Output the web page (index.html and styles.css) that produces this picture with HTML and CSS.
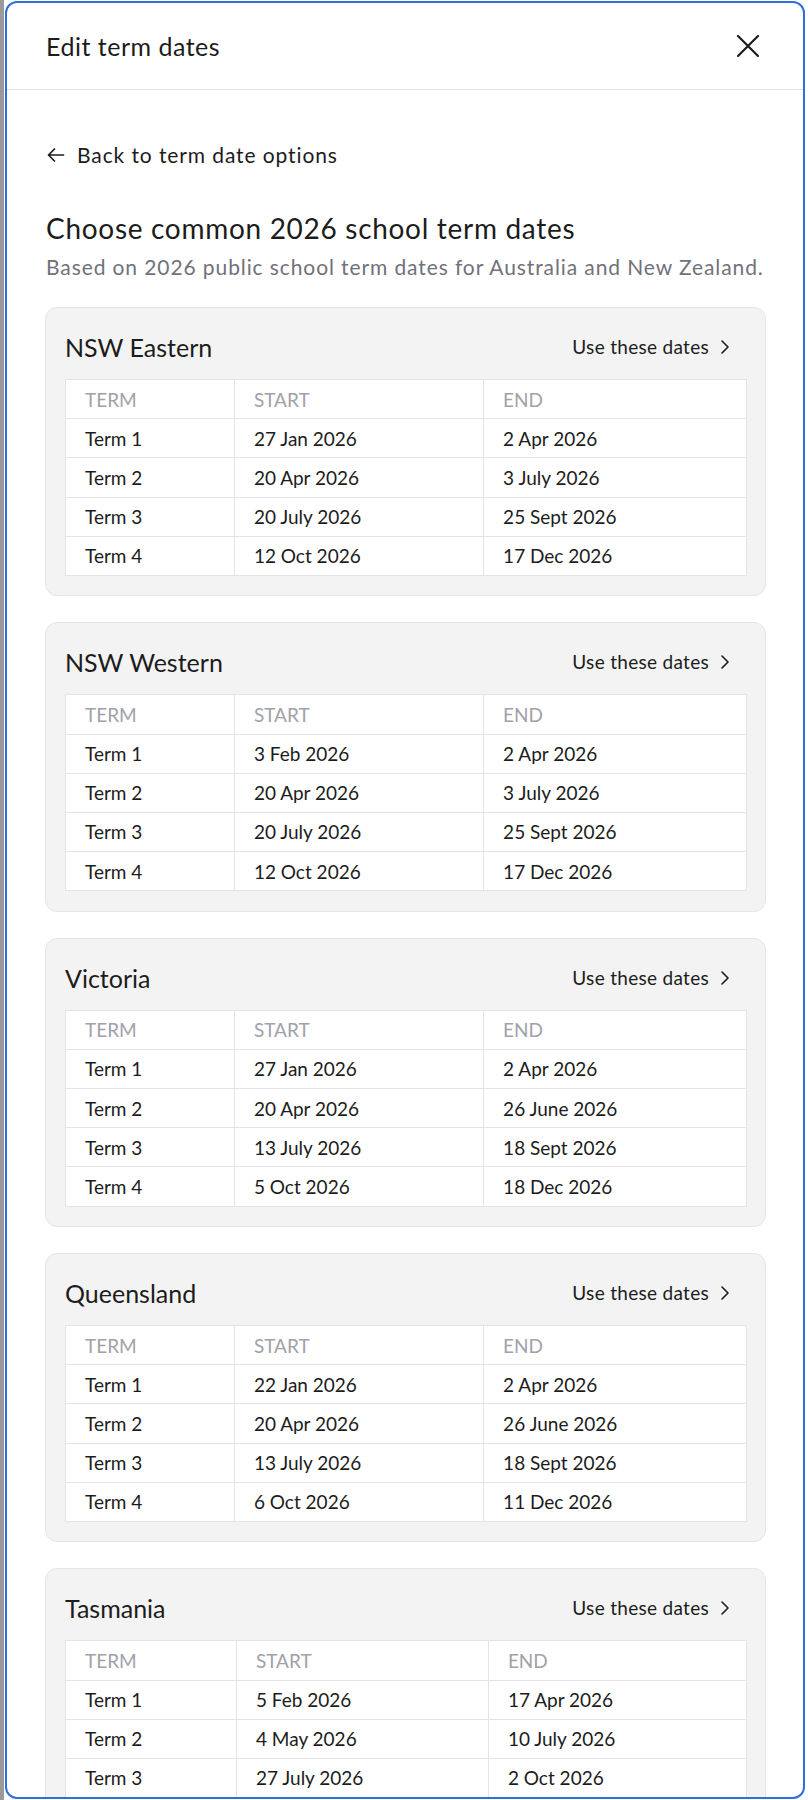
FILE: index.html
```html
<!DOCTYPE html>
<html lang="en">
<head>
<meta charset="utf-8">
<title>Edit term dates</title>
<link rel="stylesheet" href="styles.css">
</head>
<body>
<div class="modal">
  <header class="modal-header">
    <h1 class="modal-title">Edit term dates</h1>
    <button class="close-btn" aria-label="Close">
      <svg width="24" height="24" viewBox="0 0 24 24" fill="none" stroke="#1c1c1c" stroke-width="2.2" stroke-linecap="round"><path d="M2 2L22 22M22 2L2 22"/></svg>
    </button>
  </header>
  <div class="modal-body">
    <a class="back-link" href="#">
      <svg width="18" height="18" viewBox="0 0 18 18" fill="none" stroke="#1c1c1c" stroke-width="1.7" stroke-linecap="round" stroke-linejoin="round"><path d="M16.5 9H1.5M7.5 3L1.5 9l6 6"/></svg>
      <span>Back to term date options</span>
    </a>
    <h2 class="section-title">Choose common 2026 school term dates</h2>
    <p class="section-sub">Based on 2026 public school term dates for Australia and New Zealand.</p>

    <div class="card-list">
      <section class="card">
        <div class="card-head">
          <h3 class="card-title">NSW Eastern</h3>
          <a class="use-link" href="#">Use these dates <svg width="8" height="14" viewBox="0 0 8 14" fill="none" stroke="#1c1c1c" stroke-width="1.6" stroke-linecap="round" stroke-linejoin="round"><path d="M1 1l6 6-6 6"/></svg></a>
        </div>
        <table class="terms">
          <thead><tr><th>TERM</th><th>START</th><th>END</th></tr></thead>
          <tbody>
            <tr><td>Term 1</td><td>27 Jan 2026</td><td>2 Apr 2026</td></tr>
            <tr><td>Term 2</td><td>20 Apr 2026</td><td>3 July 2026</td></tr>
            <tr><td>Term 3</td><td>20 July 2026</td><td>25 Sept 2026</td></tr>
            <tr><td>Term 4</td><td>12 Oct 2026</td><td>17 Dec 2026</td></tr>
          </tbody>
        </table>
      </section>

      <section class="card">
        <div class="card-head">
          <h3 class="card-title">NSW Western</h3>
          <a class="use-link" href="#">Use these dates <svg width="8" height="14" viewBox="0 0 8 14" fill="none" stroke="#1c1c1c" stroke-width="1.6" stroke-linecap="round" stroke-linejoin="round"><path d="M1 1l6 6-6 6"/></svg></a>
        </div>
        <table class="terms">
          <thead><tr><th>TERM</th><th>START</th><th>END</th></tr></thead>
          <tbody>
            <tr><td>Term 1</td><td>3 Feb 2026</td><td>2 Apr 2026</td></tr>
            <tr><td>Term 2</td><td>20 Apr 2026</td><td>3 July 2026</td></tr>
            <tr><td>Term 3</td><td>20 July 2026</td><td>25 Sept 2026</td></tr>
            <tr><td>Term 4</td><td>12 Oct 2026</td><td>17 Dec 2026</td></tr>
          </tbody>
        </table>
      </section>

      <section class="card">
        <div class="card-head">
          <h3 class="card-title">Victoria</h3>
          <a class="use-link" href="#">Use these dates <svg width="8" height="14" viewBox="0 0 8 14" fill="none" stroke="#1c1c1c" stroke-width="1.6" stroke-linecap="round" stroke-linejoin="round"><path d="M1 1l6 6-6 6"/></svg></a>
        </div>
        <table class="terms">
          <thead><tr><th>TERM</th><th>START</th><th>END</th></tr></thead>
          <tbody>
            <tr><td>Term 1</td><td>27 Jan 2026</td><td>2 Apr 2026</td></tr>
            <tr><td>Term 2</td><td>20 Apr 2026</td><td>26 June 2026</td></tr>
            <tr><td>Term 3</td><td>13 July 2026</td><td>18 Sept 2026</td></tr>
            <tr><td>Term 4</td><td>5 Oct 2026</td><td>18 Dec 2026</td></tr>
          </tbody>
        </table>
      </section>

      <section class="card">
        <div class="card-head">
          <h3 class="card-title">Queensland</h3>
          <a class="use-link" href="#">Use these dates <svg width="8" height="14" viewBox="0 0 8 14" fill="none" stroke="#1c1c1c" stroke-width="1.6" stroke-linecap="round" stroke-linejoin="round"><path d="M1 1l6 6-6 6"/></svg></a>
        </div>
        <table class="terms">
          <thead><tr><th>TERM</th><th>START</th><th>END</th></tr></thead>
          <tbody>
            <tr><td>Term 1</td><td>22 Jan 2026</td><td>2 Apr 2026</td></tr>
            <tr><td>Term 2</td><td>20 Apr 2026</td><td>26 June 2026</td></tr>
            <tr><td>Term 3</td><td>13 July 2026</td><td>18 Sept 2026</td></tr>
            <tr><td>Term 4</td><td>6 Oct 2026</td><td>11 Dec 2026</td></tr>
          </tbody>
        </table>
      </section>

      <section class="card">
        <div class="card-head">
          <h3 class="card-title">Tasmania</h3>
          <a class="use-link" href="#">Use these dates <svg width="8" height="14" viewBox="0 0 8 14" fill="none" stroke="#1c1c1c" stroke-width="1.6" stroke-linecap="round" stroke-linejoin="round"><path d="M1 1l6 6-6 6"/></svg></a>
        </div>
        <table class="terms terms-alt">
          <thead><tr><th>TERM</th><th>START</th><th>END</th></tr></thead>
          <tbody>
            <tr><td>Term 1</td><td>5 Feb 2026</td><td>17 Apr 2026</td></tr>
            <tr><td>Term 2</td><td>4 May 2026</td><td>10 July 2026</td></tr>
            <tr><td>Term 3</td><td>27 July 2026</td><td>2 Oct 2026</td></tr>
            <tr><td>Term 4</td><td>19 Oct 2026</td><td>17 Dec 2026</td></tr>
          </tbody>
        </table>
      </section>
    </div>
  </div>
</div>
</body>
</html>
```
FILE: styles.css
```css
* { box-sizing: border-box; }

html, body {
  margin: 0;
  padding: 0;
}

body {
  background: linear-gradient(to right, #9a9a9a 0, #9a9a9a 4px, #ffffff 4px);
  font-family: "Lato", "Noto Sans", sans-serif;
  color: #1c1c1c;
  height: 1800px;
  overflow: hidden;
}

.modal {
  margin: 1px 0 0 5px;
  width: 800px;
  height: 1798px;
  border: 2px solid #2f6fdc;
  border-radius: 12px;
  background: #ffffff;
  overflow: hidden;
  display: flex;
  flex-direction: column;
}

.modal-header {
  flex: 0 0 auto;
  height: 87px;
  border-bottom: 1px solid #e2e2e2;
  display: flex;
  align-items: center;
  justify-content: space-between;
  padding: 0 43px 0 39px;
}

.modal-title {
  margin: 0;
  font-size: 25px;
  letter-spacing: 0.5px;
  font-weight: 400;
  line-height: 32px;
}

.close-btn {
  border: 0;
  background: none;
  padding: 0;
  width: 24px;
  height: 24px;
  display: flex;
}

.modal-body {
  flex: 1 1 auto;
  overflow: hidden;
  padding: 51px 37px 40px 38px;
}

.back-link {
  display: flex;
  align-items: center;
  gap: 12px;
  margin-left: 2px;
  color: #1c1c1c;
  text-decoration: none;
  font-size: 21px;
  letter-spacing: 0.9px;
  line-height: 28px;
}

.section-title {
  margin: 41px 0 0 1px;
  font-size: 28px;
  letter-spacing: 0.7px;
  font-weight: 400;
  line-height: 36px;
}

.section-sub {
  margin: 7px 0 0 1px;
  font-size: 21px;
  letter-spacing: 0.9px;
  line-height: 28px;
  color: #71717a;
  white-space: nowrap;
}

.card-list {
  margin-top: 26px;
  display: flex;
  flex-direction: column;
  gap: 26px;
}

.card {
  background: #f3f3f3;
  border: 1px solid #e5e5e5;
  border-radius: 12px;
  padding: 20px 18px 19.4px 19px;
}

.card-head {
  display: flex;
  align-items: center;
  justify-content: space-between;
  height: 38px;
  margin-bottom: 13px;
}

.card-title {
  margin: 0;
  font-size: 25px;
  font-weight: 400;
  line-height: 32px;
}

.use-link {
  display: flex;
  align-items: center;
  gap: 12px;
  padding-right: 18px;
  color: #1c1c1c;
  text-decoration: none;
  font-size: 19px;
  letter-spacing: 0.3px;
  line-height: 24px;
}

.terms {
  width: 100%;
  border-collapse: collapse;
  table-layout: fixed;
  background: #ffffff;
  font-size: 19px;
}

.terms th,
.terms td {
  border: 1px solid #e4e4e4;
  height: 39.2px;
  padding: 1px 19px 0;
  text-align: left;
  font-weight: 400;
  line-height: 24px;
}

.terms th {
  color: #a1a1aa;
}

.terms th:nth-child(1) { width: 24.8%; }
.terms th:nth-child(2) { width: 36.6%; }

.terms-alt th:nth-child(1) { width: 25.1%; }
.terms-alt th:nth-child(2) { width: 37%; }
```
